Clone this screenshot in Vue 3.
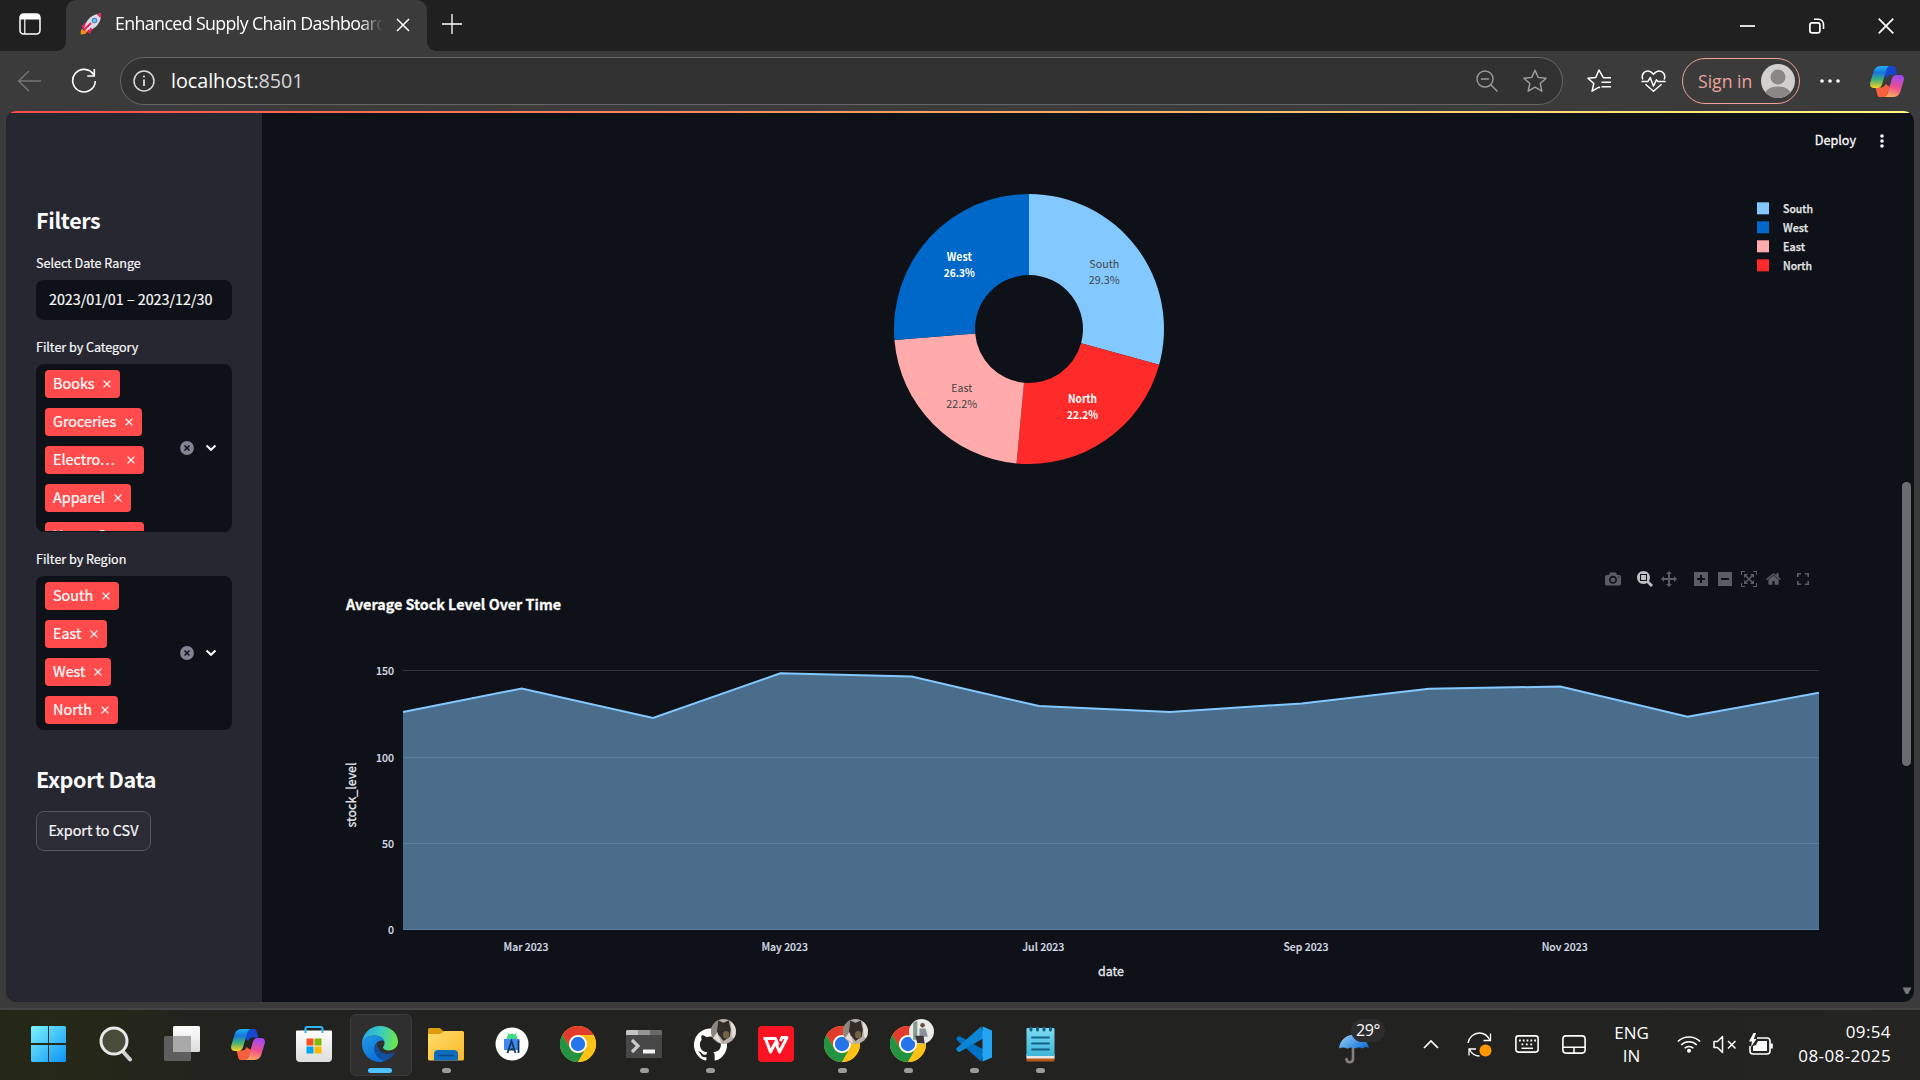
<script setup>
const categories = [
  { name: 'Books', width: 75 },
  { name: 'Groceries', width: 97 },
  { name: 'Electro', more: true, width: 99 },
  { name: 'Apparel', width: 86 },
  { name: 'Home G', more: true, width: 99 },
]
const regions = [
  { name: 'South', width: 74 },
  { name: 'East', width: 62 },
  { name: 'West', width: 66 },
  { name: 'North', width: 73 },
]

const legend = [
  { name: 'South', color: '#83c9ff', width: 30 },
  { name: 'West', color: '#0068c9', width: 25 },
  { name: 'East', color: '#ffabab', width: 22 },
  { name: 'North', color: '#ff2b2b', width: 29 },
]

const cx = 1029
const cy = 329
function slice(from, to, outer = 135, inner = 54) {
  const p = (deg, r) => {
    const a = (deg * Math.PI) / 180
    return `${(cx + r * Math.sin(a)).toFixed(2)} ${(cy - r * Math.cos(a)).toFixed(2)}`
  }
  return `M${p(from, outer)}A${outer} ${outer} 0 0 1 ${p(to, outer)}L${p(to, inner)}A${inner} ${inner} 0 0 0 ${p(from, inner)}Z`
}
const slices = [
  { name: 'South', pct: '29.3%', from: 0, to: 105.4, color: '#83c9ff', x: 1104.3, y: 268, nw: 30, pw: 31, dark: true },
  { name: 'North', pct: '22.2%', from: 105.4, to: 185.3, color: '#ff2b2b', x: 1082.5, y: 403, nw: 29, pw: 31 },
  { name: 'East', pct: '22.2%', from: 185.3, to: 265.3, color: '#ffabab', x: 961.8, y: 391.500, nw: 21, pw: 31, dark: true },
  { name: 'West', pct: '26.3%', from: 265.3, to: 360, color: '#0068c9', x: 959.3, y: 261.300, nw: 25, pw: 31 },
]

const points = [
  [403, 712], [521.7, 688.5], [653, 718], [780.3, 673.3], [911.7, 676.5], [1038.9, 706],
  [1170, 712], [1301.8, 703.4], [1429, 688.8], [1560.4, 686.5], [1687.6, 716.8], [1819, 692.8],
]
const line = points.map((p) => p.join(',')).join(' ')
const area = `403,930 ${line} 1819,930`
const yTicks = [
  { v: '150', y: 670.5, w: 18 },
  { v: '100', y: 757.5, w: 18 },
  { v: '50', y: 843.5, w: 12 },
  { v: '0', y: 929.5, w: 6 },
]
const xTicks = [
  { v: 'Mar 2023', x: 526, w: 45 },
  { v: 'May 2023', x: 784.7, w: 46.5 },
  { v: 'Jul 2023', x: 1043.3, w: 42 },
  { v: 'Sep 2023', x: 1306, w: 45 },
  { v: 'Nov 2023', x: 1564.7, w: 46 },
]

const modebar = [
  { id: 'camera', gap: 0, w: 16, vb: '0 0 1000 1000', d: 'm500 450c-83 0-150-67-150-150 0-83 67-150 150-150 83 0 150 67 150 150 0 83-67 150-150 150z m400 150h-120c-16 0-34 13-39 29l-31 93c-6 15-23 28-40 28h-340c-16 0-34-13-39-28l-31-94c-6-15-23-28-40-28h-120c-55 0-100-45-100-100v-450c0-55 45-100 100-100h800c55 0 100 45 100 100v450c0 55-45 100-100 100z m-400-550c-138 0-250 112-250 250 0 138 112 250 250 250 138 0 250-112 250-250 0-138-112-250-250-250z m365 380c-19 0-35 16-35 35 0 19 16 35 35 35 19 0 35-16 35-35 0-19-16-35-35-35z' },
  { id: 'zoom', gap: 16, w: 16, vb: '0 0 1000 1000', on: true, d: 'm1000-25l-250 251c40 63 63 138 63 218 0 224-182 406-407 406-224 0-406-182-406-406s183-406 407-406c80 0 155 22 218 62l250-250 125 125z m-812 250l0 438 437 0 0-438-437 0z m62 375l313 0 0-312-313 0 0 312z' },
  { id: 'pan', gap: 8, w: 16, vb: '0 0 1000 1000', d: 'm1000 350l-187 188 0-125-250 0 0 250 125 0-188 187-187-187 125 0 0-250-250 0 0 125-188-188 186-187 0 125 252 0 0-250-125 0 187-188 188 188-125 0 0 250 250 0 0-126 187 188z' },
  { id: 'plus', gap: 17, w: 14, vb: '0 0 875 1000', d: 'm1 787l0-875 875 0 0 875-875 0z m687-500l-187 0 0-187-125 0 0 187-188 0 0 125 188 0 0 187 125 0 0-187 187 0 0-125z' },
  { id: 'minus', gap: 10, w: 14, vb: '0 0 875 1000', d: 'm0 788l0-876 875 0 0 876-875 0z m688-500l-500 0 0 125 500 0 0-125z' },
  { id: 'autoscale', gap: 9, w: 16, vb: '0 0 1000 1000', d: 'm250 850l-187 0-63 0 0-62 0-188 63 0 0 188 187 0 0 62z m688 0l-188 0 0-62 188 0 0-188 62 0 0 188 0 62-62 0z m-875-938l0 188-63 0 0-188 0-62 63 0 187 0 0 62-187 0z m875 188l0-188-188 0 0-62 188 0 62 0 0 62 0 188-62 0z m-125 188l-1 0-93-94-156 156 156 156 92-93 2 0 0 250-250 0 0-2 93-92-156-156-156 156 94 92 0 2-250 0 0-250 0 0 93 93 157-156-157-156-93 94 0 0 0-250 250 0 0 0-94 93 156 157 156-157-93-93 0 0 250 0 0 250z' },
  { id: 'home', gap: 9, w: 15, vb: '0 0 928.6 1000', d: 'm786 296v-267q0-15-11-26t-25-10h-214v214h-143v-214h-214q-15 0-25 10t-11 26v267q0 1 0 2t0 2l321 264 321-264q1-1 1-4z m124 39l-34-41q-5-5-12-6h-2q-7 0-12 3l-386 322-386-322q-7-4-13-4-7 2-12 7l-35 41q-4 5-3 13t6 12l401 334q18 15 42 15t43-15l136-114v109q0 8 5 13t13 5h107q8 0 13-5t5-13v-227l122-102q5-5 6-12t-4-13z' },
]
</script>

<template>
  <div class="screen">
    <svg class="defs" width="0" height="0">
      <defs>
        <linearGradient id="cpA" x1="0" y1="0" x2="0" y2="1">
          <stop offset="0" stop-color="#1db4f0" /><stop offset=".3" stop-color="#1676e0" />
          <stop offset=".62" stop-color="#3fb07a" /><stop offset="1" stop-color="#ffd21f" />
        </linearGradient>
        <linearGradient id="cpB" x1=".3" y1="0" x2=".1" y2="1">
          <stop offset="0" stop-color="#a348ee" /><stop offset=".5" stop-color="#ee5090" />
          <stop offset="1" stop-color="#ffb357" />
        </linearGradient>
        <linearGradient id="win" x1="0" y1="0" x2="1" y2="1">
          <stop offset="0" stop-color="#7df3fd" /><stop offset="1" stop-color="#0a93f5" />
        </linearGradient>
        <linearGradient id="winTop" x1="0" y1="0" x2="0" y2="1">
          <stop offset="0" stop-color="#fff" /><stop offset="1" stop-color="#dcdcdc" />
        </linearGradient>
        <linearGradient id="edgeA" x1="0" y1=".3" x2="1" y2=".4">
          <stop offset="0" stop-color="#2ba5e8" /><stop offset=".5" stop-color="#38cac4" />
          <stop offset="1" stop-color="#6fe846" />
        </linearGradient>
        <linearGradient id="edgeB" x1="0" y1="0" x2=".6" y2="1">
          <stop offset="0" stop-color="#1f9be5" /><stop offset="1" stop-color="#0b6fd6" />
        </linearGradient>
        <linearGradient id="folder" x1="0" y1="0" x2="1" y2="1">
          <stop offset="0" stop-color="#ffdc6b" /><stop offset="1" stop-color="#fbb829" />
        </linearGradient>
        <linearGradient id="note" x1="0" y1="0" x2="0" y2="1">
          <stop offset="0" stop-color="#7cdcf2" /><stop offset="1" stop-color="#3fb4d8" />
        </linearGradient>
        <linearGradient id="umb" x1="0" y1="0" x2="1" y2=".6">
          <stop offset="0" stop-color="#9bd3fb" /><stop offset="1" stop-color="#1b76d8" />
        </linearGradient>
        <symbol id="copilot" viewBox="0 0 34 31">
          <path d="M15 0h7.500c2 0 2.700 1 3.300 3l1.600 5.500H22c-3 0-4 1.500-4.800 4L14 9z" fill="#1547cf" />
          <path d="M9.500 31c-1.300 0-1.700-.7-2.200-2.200l-1.300-5.300c-.3-1.500-1-2-2-2H11c2.500 0 3.500-1.500 4.500-3.500L20 21l-4 10z" fill="#f6603c" />
          <path d="M11 0h8.300c-2 .6-2.600 2.500-3.200 4.500l-4 13.500c-.9 2.800-2.200 4-4.700 4H4c-3.300 0-4.500-2.300-3.700-5.500L3.800 5C4.800 1.600 7.500 0 11 0z" fill="url(#cpA)" />
          <path d="M23 31h-8.300c2-.6 2.600-2.500 3.200-4.500l4-13.500c.9-2.800 2.200-4 4.700-4H30c3.300 0 4.500 2.300 3.700 5.500L30.200 26c-1 3.400-3.700 5-7.200 5z" fill="url(#cpB)" />
        </symbol>
        <symbol id="chrome" viewBox="0 0 48 48">
          <circle cx="24" cy="24" r="24" fill="#fbbc05" />
          <path d="M3.200 12A24 24 0 0 1 44.800 12H24a12 12 0 0 0-10.400 18z" fill="#e33b2e" />
          <path d="M3.200 12L13.600 30A12 12 0 0 0 34.400 30L24 48A24 24 0 0 1 3.200 12z" fill="#229342" />
          <path d="M24 12H44.800A24 24 0 0 1 24 48L34.400 30A12 12 0 0 0 24 12z" fill="#fbc116" />
          <circle cx="24" cy="24" r="12" fill="#fff" />
          <circle cx="24" cy="24" r="9.600" fill="#2674ea" />
        </symbol>
        <symbol id="avatarCat" viewBox="0 0 24 24">
          <circle cx="12" cy="12" r="12" fill="#b7afa6" />
          <path d="M0 12A12 12 0 0 1 8 .7L5 21.500A12 12 0 0 1 0 12z" fill="#8d867d" />
          <path d="M7 1.500l5 2 5-2 2 8.500-1 7-6 4-4-5-3 3z" fill="#332d29" />
          <ellipse cx="14.500" cy="15" rx="3" ry="3.500" fill="#756345" />
          <path d="M2 18.500l4-6 2 5 2 6z" fill="#e3ddd6" />
          <path d="M19 2.500a12 12 0 0 1 3 16l-2-2z" fill="#e0dcd6" />
        </symbol>
        <symbol id="avatarMan" viewBox="0 0 24 24">
          <circle cx="12" cy="12" r="12" fill="#e9eceb" />
          <path d="M4 3l4-1v18l-4 0z" fill="#63836f" opacity=".75" />
          <circle cx="13" cy="6" r="2.200" fill="#6a4b3f" />
          <path d="M10 9h6l2 8h-8z" fill="#8c8f9c" /><path d="M6 16h8l1 7.500-7-.5z" fill="#3c3638" />
        </symbol>
      </defs>
    </svg>

    <div class="tabbar">
      <svg class="workspaces" viewBox="0 0 22 22" width="22" height="22">
        <rect x="1" y="1" width="20" height="20" rx="3.500" fill="none" stroke="#fff" stroke-width="1.500" />
        <path d="M1 6.500V4a3 3 0 0 1 3-3h14a3 3 0 0 1 3 3v2.500z" fill="#fff" />
        <path d="M5.800 6v15" stroke="#fff" stroke-width="1.200" />
      </svg>
      <div class="tab">
        <svg class="rocket" viewBox="0 0 22 22" width="22" height="22">
          <path d="M6 9L1.500 13l1 2.500L7 13zM13 16l-4 4.500-1.500-1L9 15z" fill="#e0245e" />
          <path d="M3.500 15.500L1 17l-.5 4.500L5 21l3-3z" fill="#f4900c" />
          <path d="M21 .5C15 .5 9 4 6 10l-2 5.500 3 2.500 5.500-2C18 13 21.500 7 21 .5z" fill="#e1d8e8" />
          <path d="M21 .5c-1.500 0-3 .2-4.300.7l3.800 4c.5-1.500.6-3.200.5-4.700z" fill="#f0285a" />
          <circle cx="14.500" cy="7.500" r="2.800" fill="#3b88c3" /><circle cx="14.500" cy="7.500" r="1.500" fill="#8ccaf7" />
          <path d="M11 10l-7.500 7.500M8 17l2 2 1-4" stroke="#e0245e" stroke-width="2" fill="none" />
        </svg>
        <span class="tab-title">Enhanced Supply Chain Dashboard</span>
        <svg class="tab-close" viewBox="0 0 14 14" width="14" height="14"><path d="M1 1l12 12M13 1L1 13" stroke="#fff" stroke-width="1.500" /></svg>
      </div>
      <svg class="tab-new" viewBox="0 0 22 22" width="22" height="22"><path d="M11 1v20M1 11h20" stroke="#fff" stroke-width="1.300" /></svg>
      <div class="window-buttons">
        <svg viewBox="0 0 16 16" width="16" height="16"><path d="M0 8h15" stroke="#fff" stroke-width="1.700" /></svg>
        <svg viewBox="0 0 16 16" width="16" height="16"><rect x=".9" y="4.900" width="10" height="10" rx="2.200" fill="none" stroke="#fff" stroke-width="1.700" /><path d="M5 1.300h4.500a5 5 0 0 1 5 5V11" fill="none" stroke="#fff" stroke-width="1.600" /></svg>
        <svg viewBox="0 0 16 16" width="16" height="16"><path d="M.7.700l14.600 14.600M15.300.7L.7 15.300" stroke="#fff" stroke-width="1.700" /></svg>
      </div>
    </div>

    <div class="toolbar">
      <svg class="back" viewBox="0 0 24 22" width="24" height="22"><path d="M12 1L1.500 11 12 21M1.500 11H24" stroke="#777" stroke-width="1.400" fill="none" /></svg>
      <svg class="reload" viewBox="0 0 26 26" width="26" height="26"><path d="M22.500 6.500A11.300 11.300 0 1 0 24.300 13M23.300 1v7h-7" stroke="#fff" stroke-width="1.600" fill="none" /></svg>
      <div class="address">
        <svg class="info" viewBox="0 0 22 22" width="22" height="22"><circle cx="11" cy="11" r="10" fill="none" stroke="#ddd" stroke-width="1.500" /><path d="M11 9.500V16" stroke="#ddd" stroke-width="1.800" /><circle cx="11" cy="6.500" r="1.100" fill="#ddd" /></svg>
        <span class="url">localhost:<em>8501</em></span>
        <svg class="zoomout" viewBox="0 0 22 22" width="22" height="22"><circle cx="9" cy="9" r="8" fill="none" stroke="#9c9c9c" stroke-width="1.400" /><path d="M5 9h8M14.700 14.700L21.500 21.500" stroke="#9c9c9c" stroke-width="1.400" /></svg>
        <svg class="fav" viewBox="0 0 24 24" width="24" height="24"><path d="M12 1.200l3.200 7.200 7.900.8-5.900 5.300 1.700 7.700L12 18.200l-6.900 4 1.700-7.700L.9 9.200l7.900-.8z" fill="none" stroke="#a0a0a0" stroke-width="1.400" stroke-linejoin="round" /></svg>
      </div>
      <svg class="favlist" viewBox="0 0 25 24" width="25" height="24"><path d="M24 8.700h-7.700L12 1l-3.200 7.400-7.900.8 5.900 5.300-1.700 7.700 6.900-4 1 .6M14.500 13.300H24M14.500 17.800H24" fill="none" stroke="#fff" stroke-width="1.500" stroke-linejoin="round" /></svg>
      <svg class="heart" viewBox="0 0 25 22" width="25" height="22"><path d="M1.800 9.500C0 5 3 .9 6.800.9c3 0 4.500 1.800 5.700 3.300C13.700 2.700 15.200.9 18.200.9 22 .9 25 5 23.200 9.500M4.500 14.200l8 7 8-7M.5 11.600h6.300l2.400-4 3.200 8.500 3-6.300 1.500 1.800H24.500" fill="none" stroke="#fff" stroke-width="1.500" stroke-linejoin="round" /></svg>
      <div class="signin">
        <span>Sign in</span>
        <svg viewBox="0 0 34 34" width="34" height="34"><defs><clipPath id="av"><circle cx="17" cy="17" r="17" /></clipPath></defs><g clip-path="url(#av)"><rect width="34" height="34" fill="#d2d0ce" /><circle cx="17" cy="13" r="7.500" fill="#8a8886" /><path d="M3 34c0-7 5-11.500 14-11.500S31 27 31 34z" fill="#8a8886" /></g></svg>
      </div>
      <svg class="more" viewBox="0 0 20 4" width="20" height="4"><circle cx="2" cy="2" r="1.800" fill="#fff" /><circle cx="10" cy="2" r="1.800" fill="#fff" /><circle cx="18" cy="2" r="1.800" fill="#fff" /></svg>
      <svg class="cp" width="34" height="31"><use href="#copilot" /></svg>
    </div>

    <div class="page">
      <div class="decoration"></div>
      <div class="app">
        <aside class="sidebar">
          <h2>Filters</h2>
          <label class="first">Select Date Range</label>
          <div class="date">2023/01/01 – 2023/12/30</div>
          <label>Filter by Category</label>
          <div class="select cat">
            <div class="tags">
              <div v-for="c in categories" :key="c.name" class="tag" :style="{ width: c.width + 'px' }">
                <span>{{ c.name }}<span v-if="c.more" class="dots">...</span></span>
                <svg viewBox="0 0 8 8" width="8" height="8"><path d="M.6.600l6.800 6.800M7.400.6L.6 7.400" stroke="#fff" stroke-width="1.300" /></svg>
              </div>
            </div>
            <svg class="clear" viewBox="0 0 14 14" width="14" height="14"><circle cx="7" cy="7" r="6.900" fill="#808495" /><path d="M4.500 4.500l5 5M9.500 4.500l-5 5" stroke="#0e1117" stroke-width="1.500" /></svg>
            <svg class="chev" viewBox="0 0 12 8" width="12" height="8"><path d="M1.500 1.500L6 5.800l4.500-4.300" fill="none" stroke="#fafafa" stroke-width="2.100" /></svg>
          </div>
          <label>Filter by Region</label>
          <div class="select reg">
            <div class="tags">
              <div v-for="c in regions" :key="c.name" class="tag" :style="{ width: c.width + 'px' }">
                <span>{{ c.name }}</span>
                <svg viewBox="0 0 8 8" width="8" height="8"><path d="M.6.600l6.800 6.800M7.400.6L.6 7.400" stroke="#fff" stroke-width="1.300" /></svg>
              </div>
            </div>
            <svg class="clear" viewBox="0 0 14 14" width="14" height="14"><circle cx="7" cy="7" r="6.900" fill="#808495" /><path d="M4.500 4.500l5 5M9.500 4.500l-5 5" stroke="#0e1117" stroke-width="1.500" /></svg>
            <svg class="chev" viewBox="0 0 12 8" width="12" height="8"><path d="M1.500 1.500L6 5.800l4.500-4.300" fill="none" stroke="#fafafa" stroke-width="2.100" /></svg>
          </div>
          <h2 class="export-title">Export Data</h2>
          <button class="export">Export to CSV</button>
        </aside>

        <main class="main">
          <header class="app-header">
            <span class="deploy">Deploy</span>
            <svg viewBox="0 0 4 14" width="4" height="14"><circle cx="2" cy="2" r="1.800" fill="#fafafa" /><circle cx="2" cy="7" r="1.800" fill="#fafafa" /><circle cx="2" cy="12" r="1.800" fill="#fafafa" /></svg>
          </header>

          <svg class="pie" viewBox="346 159 1473 412" width="1473" height="412">
            <path v-for="s in slices" :key="s.name" :d="slice(s.from, s.to)" :fill="s.color" />
            <g v-for="s in slices" :key="s.pct + s.name" text-anchor="middle" :class="s.dark ? 'lab-dark' : 'lab-light'">
              <text :x="s.x" :y="s.y" :textLength="s.nw" lengthAdjust="spacingAndGlyphs">{{ s.name }}</text>
              <text :x="s.x" :y="s.y + 16" :textLength="s.pw" lengthAdjust="spacingAndGlyphs">{{ s.pct }}</text>
            </g>
            <g v-for="(l, i) in legend" :key="l.name">
              <rect x="1757" :y="202.300 + i * 19" width="12" height="12" :fill="l.color" />
              <text class="legend-text" x="1783" :y="213.300 + i * 19" :textLength="l.width" lengthAdjust="spacingAndGlyphs">{{ l.name }}</text>
            </g>
          </svg>

          <div class="modebar">
            <svg v-for="m in modebar" :key="m.id" :viewBox="m.vb" :width="m.w" height="16" :class="{ on: m.on }" :style="{ marginLeft: m.gap + 'px' }">
              <path :d="m.d" transform="matrix(1 0 0 -1 0 850)" />
            </svg>
            <svg class="full" viewBox="0 0 12 12" width="12" height="12"><path d="M.8 4V.8H4M8 .8h3.200V4M11.200 8v3.200H8M4 11.200H.8V8" fill="none" stroke="#5b5d62" stroke-width="1.600" /></svg>
          </div>

          <svg class="stock" viewBox="330 587 1489 400" width="1489" height="400">
            <text class="chart-title" x="346" y="610" textLength="215" lengthAdjust="spacingAndGlyphs">Average Stock Level Over Time</text>
            <rect v-for="t in yTicks" :key="'g' + t.v" x="403" :y="t.y - .5" width="1416" height="1" fill="#31333f" />
            <polygon :points="area" fill="#83c9ff" fill-opacity=".5" />
            <polyline :points="line" fill="none" stroke="#83c9ff" stroke-width="2" />
            <text v-for="t in yTicks" :key="t.v" class="tick" text-anchor="end" x="394" :y="t.y + 4.500" :textLength="t.w" lengthAdjust="spacingAndGlyphs">{{ t.v }}</text>
            <text v-for="t in xTicks" :key="t.v" class="tick" text-anchor="middle" :x="t.x" y="951" :textLength="t.w" lengthAdjust="spacingAndGlyphs">{{ t.v }}</text>
            <text class="axis" text-anchor="middle" x="1111" y="975.500" textLength="26" lengthAdjust="spacingAndGlyphs">date</text>
            <text class="axis" text-anchor="middle" transform="translate(356 795) rotate(-90)" textLength="65" lengthAdjust="spacingAndGlyphs">stock_level</text>
          </svg>
        </main>
      </div>
      <div class="thumb"></div>
      <svg class="arrow" viewBox="0 0 10 8" width="10" height="8"><path d="M.5.500h9L6.200 7H3.800z" fill="#77787c" /></svg>
    </div>

    <div class="taskbar">
      <div class="apps">
        <div class="cell start"><svg viewBox="0 0 35 36" width="35" height="36"><path d="M1.500 0H17v17H0V1.500A1.500 1.500 0 0 1 1.500 0zM18 0h15.500A1.500 1.500 0 0 1 35 1.500V17H18zM0 19h17v17H1.500A1.500 1.500 0 0 1 0 34.500zM18 19h17v15.500a1.500 1.500 0 0 1-1.500 1.500H18z" fill="url(#win)" /></svg></div>
        <div class="cell"><svg viewBox="0 0 34 36" width="34" height="36"><path d="M23.500 25l7.500 8.500" stroke="#cfcfd4" stroke-width="4" stroke-linecap="round" /><circle cx="15" cy="15" r="13" fill="#4a4d3b" stroke="#e9e9ea" stroke-width="3" /></svg></div>
        <div class="cell"><svg viewBox="0 0 36 36" width="36" height="36"><rect x="0" y="10" width="27" height="25" rx="1.500" fill="#5e5e5e" /><rect x="9" y="0" width="27" height="26" rx="1.500" fill="url(#winTop)" /><path d="M9 10h18v16H10.500A1.500 1.500 0 0 1 9 24.500z" fill="#a9a9a9" /></svg></div>
        <div class="cell"><svg width="34" height="31"><use href="#copilot" /></svg></div>
        <div class="cell"><svg viewBox="0 0 36 36" width="36" height="36"><path d="M9.500 7V2.500A1.500 1.500 0 0 1 11 1h14a1.500 1.500 0 0 1 1.500 1.500V7" fill="none" stroke="#2cb7f2" stroke-width="2" /><path d="M0 5.500A1 1 0 0 1 1 4.500h34a1 1 0 0 1 1 1V32a4 4 0 0 1-4 4H4a4 4 0 0 1-4-4z" fill="url(#winTop)" /><path d="M9.500 3.500V7M26.500 3.500V7" stroke="#2cb7f2" stroke-width="2" /><path d="M10.500 12.500h7v7h-7z" fill="#f25022" /><path d="M18.500 12.500h7v7h-7z" fill="#7fba00" /><path d="M10.500 20.500h7v7h-7z" fill="#00a4ef" /><path d="M18.500 20.500h7v7h-7z" fill="#ffb900" /></svg></div>
        <div class="cell active"><svg viewBox="0 0 36 36" width="36" height="36">
          <path d="M0 18C0 8 8 0 18 0s18 7 18 15.500c0 5.500-4 9-9 9-4 0-6-1.500-6-3 0-1 1.500-1.500 1.500-4.500C22.500 13 18 9.500 12.500 9.500 6 9.500 1 13 0 18z" fill="url(#edgeA)" />
          <path d="M0 18c0-5 6-8.500 12.500-8.500 5 0 9 2.500 10 6-4-3-10 1-10 7 0 7 6 11 11 11.500-1.500 1.500-4 2-5.500 2C8 36 0 28 0 18z" fill="url(#edgeB)" />
          <path d="M14.500 17c-1 1.500-2 3.500-2 6 0 7 6 12 11.500 11.500 4-1.500 7-4.500 9-7.500.3-.8-.4-1-1-.6-6 3-16 2-17.500-9.400z" fill="#124f9e" />
        </svg><i class="run long"></i></div>
        <div class="cell"><svg viewBox="0 0 36 34" width="36" height="34"><path d="M0 2.500A1.500 1.500 0 0 1 1.500 1h10c1.500 0 2.500 3 4.500 3v5H0z" fill="#e09b0c" /><path d="M0 7h12c2 0 3-3 5-3h17.500A1.500 1.500 0 0 1 36 5.500V32a1.500 1.500 0 0 1-1.500 1.500h-33A1.500 1.500 0 0 1 0 32z" fill="url(#folder)" /><path d="M6 33.500V27a4 4 0 0 1 4-4h16a4 4 0 0 1 4 4v6.500z" fill="#0f6cbd" /><path d="M11 28.500h14" stroke="#0a4a8a" stroke-width="1.600" stroke-linecap="round" /></svg><i class="run"></i></div>
        <div class="cell"><svg viewBox="0 0 34 34" width="34" height="34"><circle cx="17" cy="17" r="16.500" fill="#fff" /><path d="M11.500 12a5 5 0 0 1 11 0z" fill="#3ddc84" /><path d="M12.500 6l1.500 2.500M21.500 6L20 8.500" stroke="#3ddc84" /><path d="M9 12h15.500v3H23v8H9z" fill="#4285f4" /><path d="M12.500 26L16.500 14l4 12M14 22.500h5M23.500 13.500V26" fill="none" stroke="#0b3a52" stroke-width="1.800" /></svg></div>
        <div class="cell"><svg width="36" height="36"><use href="#chrome" /></svg></div>
        <div class="cell"><svg viewBox="0 0 36 28" width="36" height="28"><rect width="36" height="28" rx="1.500" fill="#474747" /><path d="M0 5V1.500A1.500 1.500 0 0 1 1.500 0H12v5z" fill="#c4c4c4" /><path d="M12 0h12v5H12z" fill="#959595" /><path d="M24 0h10.500A1.500 1.500 0 0 1 36 1.500V5H24z" fill="#6a6a6a" /><path d="M6 10l6 6-6 6" fill="none" stroke="#c9c9c9" stroke-width="3.200" /><path d="M17 21.500h12" stroke="#f2f2f2" stroke-width="4" /></svg><i class="run"></i></div>
        <div class="cell"><svg viewBox="0 0 24 24" width="33" height="33"><path d="M12 .3a12 12 0 0 0-3.800 23.400c.6.100.8-.3.800-.6v-2c-3.300.7-4-1.600-4-1.600-.6-1.400-1.400-1.800-1.400-1.800-1-.7.100-.7.100-.7 1.200 0 1.900 1.200 1.900 1.200 1 1.800 2.800 1.300 3.500 1 0-.8.400-1.300.7-1.600-2.700-.3-5.500-1.300-5.500-6 0-1.200.5-2.300 1.300-3.100-.2-.4-.6-1.600 0-3.200 0 0 1-.3 3.400 1.200a11.500 11.500 0 0 1 6 0c2.300-1.500 3.300-1.200 3.300-1.200.6 1.600.2 2.800 0 3.200.9.800 1.300 1.900 1.300 3.200 0 4.600-2.800 5.600-5.500 5.900.5.400.9 1 .9 2.200v3.300c0 .3.100.7.800.6A12 12 0 0 0 12 .3z" fill="#fff" /></svg><svg class="badge" width="25" height="25"><use href="#avatarCat" /></svg><i class="run"></i></div>
        <div class="cell"><svg viewBox="0 0 36 36" width="36" height="36"><rect width="36" height="36" rx="4" fill="#fc1322" /><path d="M5.500 12.500h12L20 19M7.500 12.500l5 13.500 5-9.500 4 9.500 7.500-14.500-5 0-1.500 3.500" fill="none" stroke="#fff" stroke-width="3" stroke-linejoin="round" /></svg></div>
        <div class="cell"><svg width="36" height="36"><use href="#chrome" /></svg><svg class="badge" width="25" height="25"><use href="#avatarCat" /></svg><i class="run"></i></div>
        <div class="cell"><svg width="36" height="36"><use href="#chrome" /></svg><svg class="badge" width="25" height="25"><use href="#avatarMan" /></svg><i class="run"></i></div>
        <div class="cell"><svg viewBox="0 0 36 36" width="36" height="36"><path d="M1 11.500c-1 .9-1 1.800 0 2.700L25 35.500l3-8.500V24L4 10.200c-1-.6-1.600-.3-3 1.300z" fill="#0072c6" /><path d="M1 24.500c-1-.9-1-1.800 0-2.700L25 .5l3 8v3.500L4 25.800c-1 .6-1.600.3-3-1.300z" fill="#0e86d6" /><path d="M25.500 0L36 4.500v27L25.500 36c1 0 1-1 1-2V2c0-1 0-2-1-2z" fill="#25a5f1" /></svg><i class="run"></i></div>
        <div class="cell"><svg viewBox="0 0 29 36" width="29" height="36"><path d="M.5 30h28v4.500a1 1 0 0 1-1 1h-26a1 1 0 0 1-1-1z" fill="#b75a13" /><path d="M.5 28h28v4.500H.5z" fill="#e8e8e8" /><path d="M.5 3a1 1 0 0 1 1-1h26a1 1 0 0 1 1 1v27H.5z" fill="url(#note)" /><path d="M6 11.500h17M6 17.500h17M6 23.500h17" stroke="#12628a" stroke-width="1.800" stroke-linecap="round" /><path d="M5 2v2M11.500 2v2M18 2v2M24.500 2v2" stroke="#1a5f7e" stroke-width="3" stroke-linecap="round" /></svg><i class="run"></i></div>
      </div>
      <div class="tray">
        <div class="weather">
          <svg viewBox="0 0 30 30" width="30" height="30"><path d="M14 13v12.500a3.300 3.300 0 0 1-6.500 0V25" fill="none" stroke="#858080" stroke-width="2.600" stroke-linecap="round" /><path d="M0 14.500C1 6 7 1.500 13 .8c8-.5 15 5 17 13.200-3-1.500-4.500-1-6.500.5-2.500-1.500-4.500-1.500-7 0-3-1.500-5.500-1.200-8 .3-2.500-1.500-5.500-1.800-8.500-.3z" fill="url(#umb)" /></svg>
          <span class="temp">29°</span>
        </div>
        <svg class="up" viewBox="0 0 16 10" width="16" height="10"><path d="M1 9l7-7 7 7" fill="none" stroke="#fff" stroke-width="1.700" /></svg>
        <svg class="sync" viewBox="0 0 25 25" width="25" height="25"><path d="M1 11C2 5 7 1 12.500 1 17 1 20.500 3.500 23 8M23.500 1.500V8.500h-7M2 23.500v-6.500h7M2.500 17.500c2 4 5.500 6.500 10 6.500" fill="none" stroke="#fff" stroke-width="1.300" /><circle cx="18.500" cy="18.500" r="6" fill="#ff9800" /></svg>
        <svg class="kbd" viewBox="0 0 24 18" width="24" height="18"><rect x=".9" y=".9" width="22.200" height="16.200" rx="2.500" fill="none" stroke="#fff" stroke-width="1.600" /><path d="M4 5.500h17" stroke="#fff" stroke-width="1.800" stroke-dasharray="1.800 2" /><path d="M6.500 9.300h12" stroke="#fff" stroke-width="1.800" stroke-dasharray="1.800 2.600" /><path d="M6.500 13.300h11.500" stroke="#fff" stroke-width="1.500" /></svg>
        <svg class="pad" viewBox="0 0 24 19" width="24" height="19"><rect x=".9" y=".9" width="22.200" height="17.200" rx="3" fill="none" stroke="#fff" stroke-width="1.600" /><path d="M1 12.300h22M12 12.300V18" stroke="#fff" stroke-width="1.500" /></svg>
        <div class="lang"><span>ENG</span><span>IN</span></div>
        <svg class="wifi" viewBox="0 0 24 18" width="24" height="18"><path d="M.8 6.500a16 16 0 0 1 22.400 0M4.200 10a11 11 0 0 1 15.600 0M7.600 13.300a6.200 6.200 0 0 1 8.800 0" fill="none" stroke="#fff" stroke-width="1.500" /><circle cx="12" cy="15.700" r="2" fill="#fff" /></svg>
        <svg class="mute" viewBox="0 0 24 19" width="24" height="19"><path d="M1 6.500h3.500L9.500 1.500v16l-5-5H1zM15 6l7.500 7.500M22.500 6L15 13.500" fill="none" stroke="#fff" stroke-width="1.500" stroke-linejoin="round" /></svg>
        <svg class="bat" viewBox="0 0 25 23" width="25" height="23"><path d="M8 5h10a3 3 0 0 1 3 3v10a3 3 0 0 1-3 3H4a3 3 0 0 1-3-3v-5" fill="none" stroke="#fff" stroke-width="1.600" /><path d="M22.500 10.500v5" stroke="#fff" stroke-width="2.600" /><path d="M9 8h9v10H4v-5l3-1z" fill="#fff" /><path d="M4.500 0L0 8.500h3L2 14l5.500-8H4.800L7 0z" fill="#fff" /></svg>
        <div class="clock"><span>09:54</span><span>08-08-2025</span></div>
      </div>
    </div>
  </div>
</template>

<style>
body { background: #3b3b3b; overflow: hidden; }
</style>

<style scoped>
.screen { width: 1920px; height: 1080px; background: #3b3b3b; display: flex; flex-direction: column; overflow: hidden; font-family: "Noto Sans CJK SC", "Open Sans", sans-serif; color: #fafafa; }
.screen * { box-sizing: border-box; }
svg { display: block; flex: none; }
.defs { position: absolute; }

.tabbar { height: 51px; flex: none; background: #202020; display: flex; align-items: center; padding-right: 26px; font-family: "Open Sans", sans-serif; }
.workspaces { margin: -3px 25px 0 19px; }
.tab { position: relative; width: 361px; height: 51px; background: #3b3b3b; border-radius: 10px 10px 0 0; display: flex; align-items: center; padding: 0 17px 3px 14px; }
.tab::before, .tab::after { content: ""; position: absolute; bottom: 0; width: 9px; height: 9px; }
.tab::before { left: -9px; background: radial-gradient(circle at 0 0, #202020 8.500px, #3b3b3b 9px); }
.tab::after { right: -9px; background: radial-gradient(circle at 100% 0, #202020 8.500px, #3b3b3b 9px); }
.tab-title { margin: -2px 0 0 13px; width: 268px; overflow: hidden; white-space: nowrap; font-size: 17.800px; letter-spacing: -.62px; line-height: 26px; color: #fff; -webkit-mask-image: linear-gradient(90deg, #000 245px, transparent 268px); mask-image: linear-gradient(90deg, #000 245px, transparent 268px); }
.tab-close { margin-left: 13px; margin-top: 2px; }
.tab-new { margin: -4px 0 0 14px; }
.window-buttons { margin-left: auto; display: flex; gap: 53px; }

.toolbar { height: 60px; flex: none; display: flex; align-items: center; font-family: "Open Sans", sans-serif; }
.back { margin-left: 17px; }
.reload { margin-left: 30px; }
.address { margin-left: 23px; width: 1443px; height: 48px; border: 1.500px solid #666; border-radius: 24px; background: #323232; display: flex; align-items: center; padding: 0 15px 0 12px; }
.url { margin-left: 16px; font-size: 19.800px; line-height: 28px; letter-spacing: -.05px; color: #fff; }
.url em { font-style: normal; color: #d6d6d6; }
.zoomout { margin-left: auto; }
.fav { margin-left: 25px; }
.favlist { margin-left: 24px; }
.heart { margin-left: 29px; }
.signin { margin-left: 16px; width: 118px; height: 46px; border: 1.500px solid #eba39c; border-radius: 23px; display: flex; align-items: center; justify-content: space-between; padding: 0 4px 0 15px; color: #eba39c; font-size: 17.600px; line-height: 26px; white-space: nowrap; }
.more { margin-left: 20px; }
.cp { margin-left: 30px; }

.page { position: relative; margin: 0 6px; height: 891px; flex: none; border-radius: 10px 10px 11px 11px; overflow: hidden; background: #0e1117; display: flex; flex-direction: column; }
.decoration { height: 2px; flex: none; background: linear-gradient(90deg, #ff4b4b, #fffd80); }
.app { flex: 1; display: flex; min-height: 0; }
.sidebar { width: 256px; background: #262730; padding: 93px 30px 0; display: flex; flex-direction: column; align-items: flex-start; }
.sidebar h2 { margin: 0; font-size: 21.500px; line-height: 28px; font-weight: 700; letter-spacing: -.35px; white-space: nowrap; }
.sidebar label { margin: 17px 0 7px; font-size: 12.600px; line-height: 20px; letter-spacing: -.04px; white-space: nowrap; -webkit-text-stroke: .2px #fafafa; }
.sidebar label.first { margin-top: 19px; }
.date { width: 196px; height: 40px; border-radius: 8px; background: #0e1117; padding-left: 13px; font-size: 14.300px; line-height: 38px; white-space: nowrap; -webkit-text-stroke: .2px #fafafa; }
.select { width: 196px; border-radius: 8px; background: #0e1117; display: flex; align-items: center; overflow: hidden; }
.cat { height: 168px; }
.reg { height: 154px; }
.tags { width: 135px; height: 100%; padding: 6px 0 0 9px; display: flex; flex-direction: column; gap: 10px; }
.cat .tags { height: 167px; overflow: hidden; align-self: flex-start; }
.tag { height: 28px; flex: none; border-radius: 4px; background: #ff4b4b; color: #fff; display: flex; align-items: center; justify-content: space-between; padding: 0 9px 0 8px; font-size: 14.400px; line-height: 24px; white-space: nowrap; -webkit-text-stroke: .2px #fff; }
.tag > span { margin-top: -2px; }
.dots { letter-spacing: 1.200px; }
.clear { margin-left: 9px; }
.chev { margin-left: 11px; }
.sidebar .export-title { margin-top: 35px; }
.export { margin-top: 18px; width: 115px; height: 40px; border: 1px solid #55565f; border-radius: 8px; background: #2b2c36; color: #fafafa; font-family: inherit; font-size: 14.400px; line-height: 20px; padding: 0 0 2px; white-space: nowrap; -webkit-text-stroke: .2px #fafafa; }

.main { flex: 1; min-width: 0; }
.app-header { height: 46px; display: flex; align-items: center; justify-content: flex-end; padding: 10px 30px 0 0; }
.deploy { font-size: 12.600px; line-height: 20px; margin: -2px 24px 0 0; -webkit-text-stroke: .3px #fafafa; }
.pie { margin-left: 84px; }
.stock { margin-left: 68px; }
.pie text { font-size: 11px; }
.lab-dark { fill: #444; }
.lab-light { fill: #fff; font-weight: 700; }
.legend-text { fill: #e6e7e9; font-weight: 500; stroke: #e6e7e9; stroke-width: .25px; }
.modebar { height: 16px; display: flex; margin-left: 1343px; align-items: center; }
.modebar svg { fill: #5b5d62; }
.modebar svg.on { fill: #bfc0c3; }
.modebar .full { margin-left: 16px; fill: none; }
.chart-title { font-size: 14.500px; font-weight: 700; fill: #fafafa; stroke: #fafafa; stroke-width: .3px; }
.tick { font-size: 11px; font-weight: 500; fill: #d5dae5; stroke: #d5dae5; stroke-width: .2px; }
.axis { font-size: 12.800px; font-weight: 400; fill: #e6eaf1; stroke: #e6eaf1; stroke-width: .3px; }
.thumb { position: absolute; left: 1896px; top: 371px; width: 9px; height: 284px; border-radius: 4.500px; background: #6b6c70; }
.arrow { position: absolute; left: 1896px; top: 876px; }

.taskbar { margin-top: 6px; height: 72px; flex: none; border-top: 2px solid #464646; background: linear-gradient(90deg, #262817 0, #252718 90px, #222221 250px, #222221 1500px, #242422 100%); display: flex; justify-content: space-between; font-family: "Open Sans", sans-serif; }
.apps { display: flex; padding-left: 15px; }
.cell { position: relative; width: 66px; height: 68px; display: flex; align-items: center; justify-content: center; }
.cell.start { margin-right: 2px; }
.active::before { content: ""; position: absolute; left: 3px; top: 4px; width: 60px; height: 60px; border-radius: 6px; background: #2f2f2f; border: 1px solid #3b3b3b; }
.active svg { position: relative; }
.run { position: absolute; bottom: 5px; left: 28.500px; width: 9px; height: 5px; border-radius: 2.500px; background: #9b9b9b; }
.run.long { left: 21px; width: 24px; background: #4cc2ff; }
.badge { position: absolute; left: 34px; top: 9px; }
.tray { display: flex; align-items: center; padding: 0 29px 2px 0; color: #fff; }
.weather { position: relative; width: 50px; height: 68px; padding-top: 24px; }
.temp { position: absolute; left: 12px; top: 9px; width: 34px; height: 23px; border-radius: 11.500px; background: #2d2d2d; font-size: 16px; letter-spacing: -.4px; line-height: 22px; padding-left: 5px; }
.up { margin-left: 34px; }
.sync { margin-left: 28px; }
.kbd { margin-left: 23px; }
.pad { margin-left: 23px; }
.lang { margin-left: 27px; width: 37px; display: flex; flex-direction: column; align-items: center; font-size: 17px; line-height: 23px; letter-spacing: 0; }
.wifi { margin-left: 27px; }
.mute { margin-left: 12px; }
.bat { margin-left: 12px; }
.clock { margin-left: 23px; width: 94px; display: flex; flex-direction: column; align-items: flex-end; font-size: 17px; line-height: 24px; letter-spacing: .4px; white-space: nowrap; }
</style>
